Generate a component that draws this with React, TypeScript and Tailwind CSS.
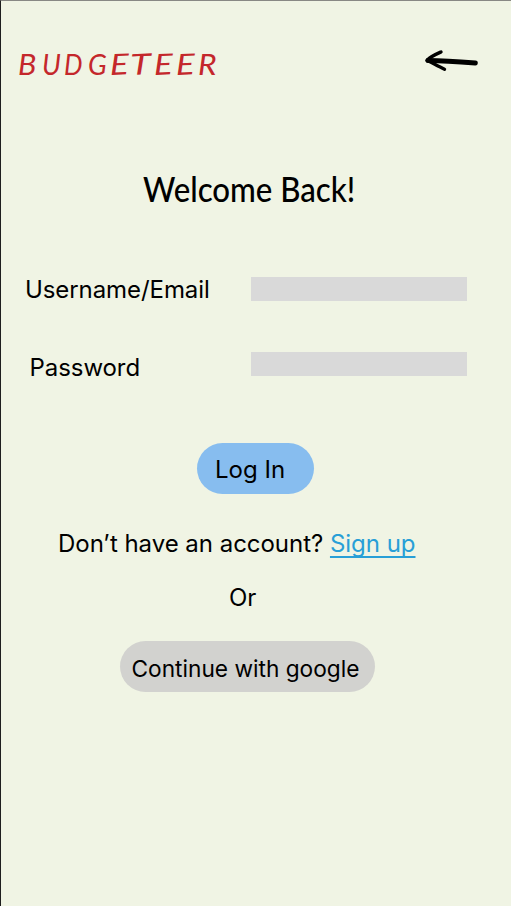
import React from "react";

const letters: [string, string][] = [
  ["B", "w-[24px] scale-x-105"],
  ["U", "w-[22px] scale-x-95"],
  ["D", "w-[24px] scale-x-90"],
  ["G", "w-[22px] scale-x-95"],
  ["E", "w-[20px] scale-x-120 -skew-y-3"],
  ["T", "w-[24px] scale-x-130 -skew-y-3"],
  ["E", "w-[22px] scale-x-120 -skew-y-3"],
  ["E", "w-[22px] scale-x-120 -skew-y-3"],
  ["R", "w-[20px] scale-x-110"],
];

function Logo() {
  return (
    <div className="flex whitespace-nowrap font-['Lato',sans-serif] text-[29px] leading-9 text-[#c4272b] italic">
      {letters.map(([letter, style], i) => (
        <span key={i} className={`inline-block origin-left ${style}`}>{letter}</span>
      ))}
    </div>
  );
}

function BackArrow() {
  return (
    <svg width="56" height="24" viewBox="0 0 56 24" fill="none" stroke="#000" strokeLinecap="round" strokeLinejoin="round">
      <path d="M4 11.6 C18 11.8 36 12.9 51.3 14" strokeWidth="5" />
      <path d="M17 3 C12.5 5 6.5 7.6 3 11.3 C9 14.2 14.5 17.6 20.5 20.2" strokeWidth="3.4" />
    </svg>
  );
}

function Field({ label, type, className, inputClass }: { label: string; type: string; className: string; inputClass: string }) {
  return (
    <label className="flex h-[30px] items-start">
      <span className={`w-[226px] shrink-0 whitespace-nowrap leading-[32px] tracking-[-0.08px] ${className}`}>{label}</span>
      <input type={type} aria-label={label} className={`h-6 w-[216px] bg-[#d9d9d9] outline-none ${inputClass}`} />
    </label>
  );
}

export default function App() {
  return (
    <main className="h-[906px] w-[511px] overflow-hidden border-t border-l border-t-[#888884] border-l-[#1e1e1e] bg-[#f0f4e4] font-['Inter',sans-serif] text-2xl text-black">
      <header className="flex h-[130px] items-start justify-between pt-[45px] pr-[31px] pl-[17px]">
        <Logo />
        <button aria-label="Back" className="mt-[3px]"><BackArrow /></button>
      </header>
      <h1 className="mt-[37px] ml-[142px] w-max origin-left scale-x-[0.918] whitespace-nowrap font-['Lato',sans-serif] text-[34px] leading-[42px] font-medium">Welcome Back!</h1>
      <form className="mt-[64px] ml-[24px]">
        <Field label="Username/Email" type="text" className="" inputClass="mt-[3px]" />
        <div className="mt-12">
          <Field label="Password" type="password" className="pl-[4.6px]" inputClass="" />
        </div>
        <button type="button" className="mt-[61px] ml-[172px] flex h-[51px] w-[117px] items-center rounded-full bg-[#87bdef] pt-[3px] pl-[18px]">Log In</button>
      </form>
      <p className="mt-[35px] ml-[57px] whitespace-nowrap leading-[30px] tracking-[-0.03px]">
        Don’t have an account? <a className="text-[#289fd7] underline decoration-[1.5px] underline-offset-[4px] [text-decoration-skip-ink:none]">Sign up</a>
      </p>
      <p className="mt-6 ml-[228px] leading-[29px]">Or</p>
      <button type="button" className="mt-[29px] ml-[119px] flex h-[51px] w-[255px] items-center rounded-full bg-[#d2d2cf] pt-[5px] pl-[11.5px] text-[22.7px] whitespace-nowrap">Continue with google</button>
    </main>
  );
}
